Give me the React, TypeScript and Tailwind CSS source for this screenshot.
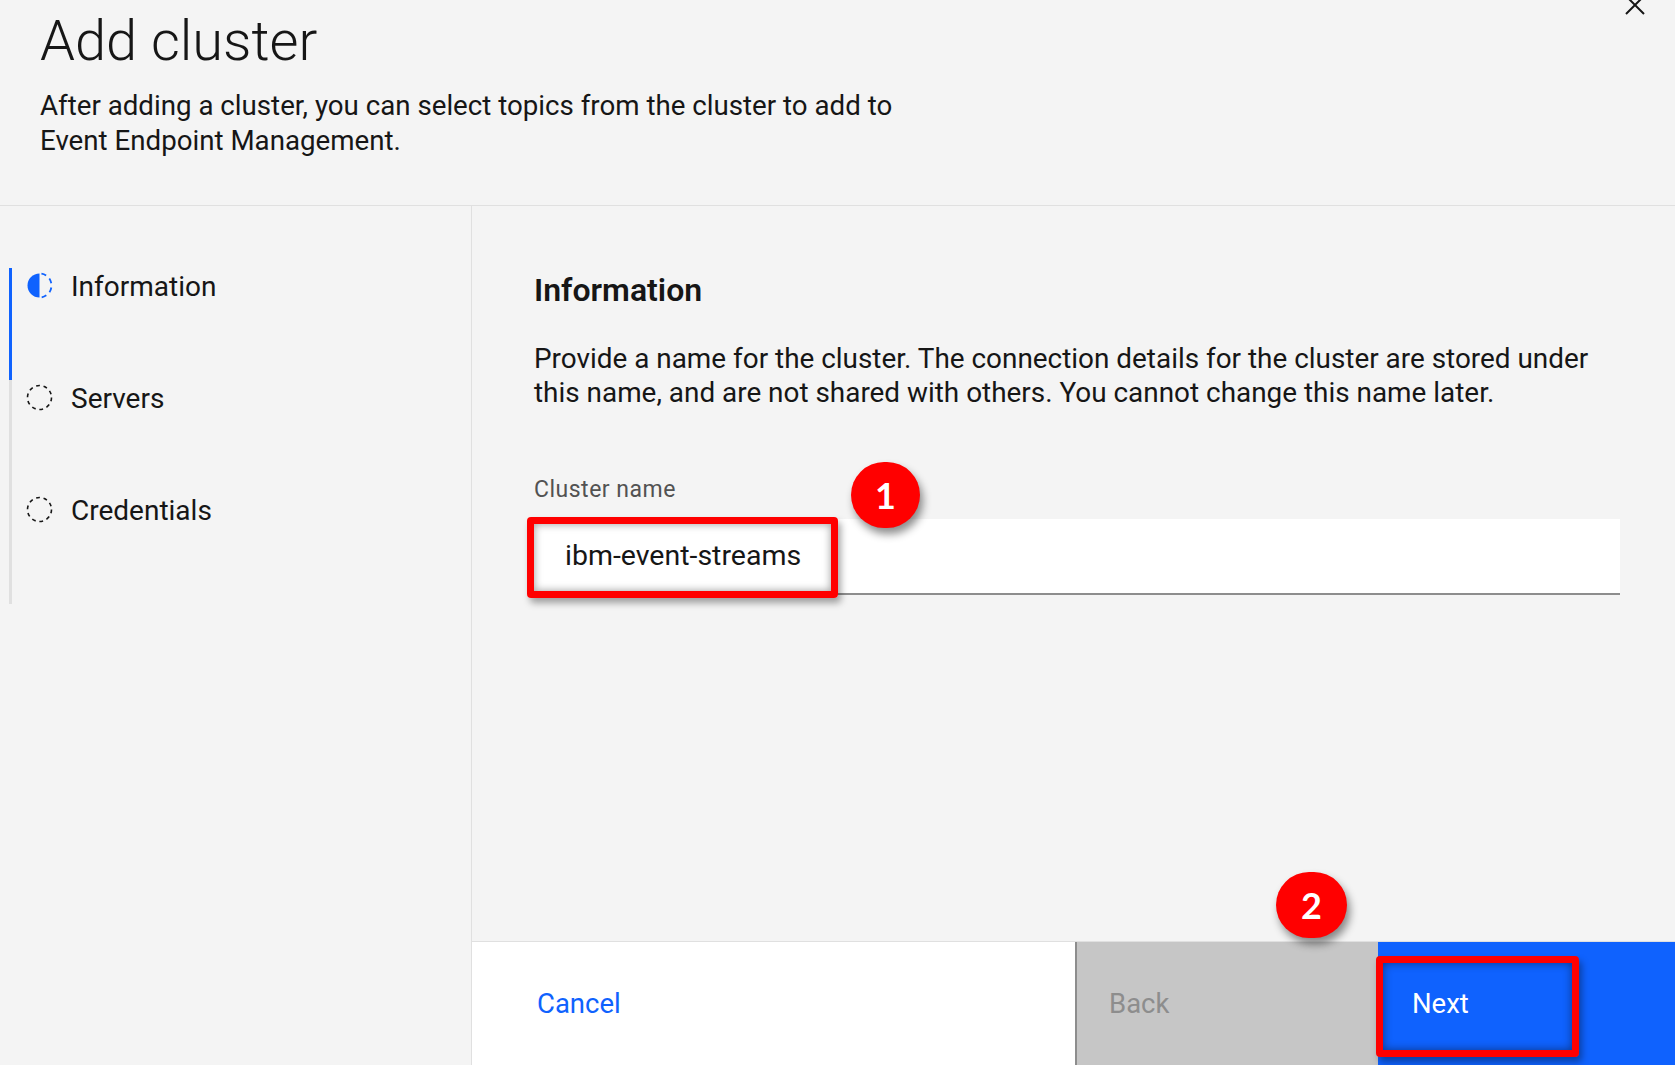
import React from "react";

type StepState = "current" | "todo";

const IncompleteIcon = () => (
  <svg width="27" height="27" viewBox="0 0 27 27" className="shrink-0">
    <path d="M13.5 1.5 A12 12 0 0 0 13.5 25.5 Z" fill="#0f62fe" />
    <path
      d="M13.5 1.5 A12 12 0 0 1 13.5 25.5"
      fill="none"
      stroke="#0f62fe"
      strokeWidth="1.8"
      strokeDasharray="5 4.4"
      strokeDashoffset="-2"
    />
  </svg>
);

const TodoIcon = () => (
  <svg width="27" height="27" viewBox="0 0 27 27" className="shrink-0">
    <circle
      cx="13.5"
      cy="13.5"
      r="12"
      fill="none"
      stroke="#161616"
      strokeWidth="1.6"
      strokeDasharray="3.8 3.74"
    />
  </svg>
);

const Step = ({ label, state }: { label: string; state: StepState }) => (
  <div
    className={
      state === "current"
        ? "flex h-[112px] items-start border-l-[3px] border-[#0f62fe] pt-[1px]"
        : "flex h-[112px] items-start border-l-[3px] border-[#e0e0e0] pt-[1px]"
    }
  >
    <div className="ml-[14px] mt-[3px]">
      {state === "current" ? <IncompleteIcon /> : <TodoIcon />}
    </div>
    <span className="ml-[18px] text-[28px] leading-[36px]">{label}</span>
  </div>
);

const App = () => {
  return (
    <div className="relative flex h-[1065px] w-[1675px] flex-col overflow-hidden bg-[#f4f4f4] font-['Roboto',sans-serif] text-[#161616]">
      <header className="relative h-[206px] shrink-0 border-b border-[#e0e0e0] px-[40px] pt-[9px]">
        <h1 className="text-[56px] font-light leading-[64px]">Add cluster</h1>
        <p className="mt-[15px] text-[27.7px] leading-[35px]">
          After adding a cluster, you can select topics from the cluster to add to
          <br />
          Event Endpoint Management.
        </p>
      </header>

      <div className="flex min-h-0 flex-1">
        <aside className="w-[472px] shrink-0 border-r border-[#e0e0e0] pl-[9px] pt-[62px]">
          <Step label="Information" state="current" />
          <Step label="Servers" state="todo" />
          <Step label="Credentials" state="todo" />
        </aside>

        <main className="flex min-w-0 flex-1 flex-col">
          <div className="flex-1 pl-[62px] pr-[55px] pt-[65px]">
            <h2 className="text-[32px] font-semibold leading-[38px]">Information</h2>
            <p className="mt-[33px] text-[27.9px] leading-[34px]">
              Provide a name for the cluster. The connection details for the cluster are stored under
              <br />
              this name, and are not shared with others. You cannot change this name later.
            </p>
            <label className="mt-[66px] block text-[23px] leading-[28px] tracking-[0.5px] text-[#525252]">
              Cluster name
            </label>
            <div className="mt-[15px] flex h-[76px] items-center border-b-2 border-[#8d8d8d] bg-white pl-[31px] text-[28.5px] leading-[36px]">
              ibm-event-streams
            </div>
          </div>

          <footer className="flex h-[124px] shrink-0 border-t border-[#e0e0e0] text-[27.5px] leading-[36px]">
            <button className="flex w-[603px] items-center bg-white pl-[65px] text-[#0f62fe]">
              Cancel
            </button>
            <button className="flex w-[303px] items-center border-l-2 border-[#8d8d8d] bg-[#c6c6c6] pl-[32px] text-[#8d8d8d]">
              Back
            </button>
            <button className="flex flex-1 items-center bg-[#0f62fe] pl-[34px] text-white">
              Next
            </button>
          </footer>
        </main>
      </div>

      {/* close icon, partly cut off at the top */}
      <svg
        width="26"
        height="26"
        viewBox="0 0 26 26"
        className="absolute left-[1622px] top-[-8px]"
      >
        <path d="M4 4 L22 22 M22 4 L4 22" stroke="#161616" strokeWidth="2" />
      </svg>

      {/* annotations */}
      <div className="absolute left-[527px] top-[517px] h-[81px] w-[311px] rounded-[4px] border-[7px] border-[#ff0000] shadow-[inset_0_0_8px_rgba(0,0,0,0.4),3px_5px_7px_rgba(0,0,0,0.35)]" />
      <div className="absolute left-[1376px] top-[956px] h-[101px] w-[203px] rounded-[4px] border-[7px] border-[#ff0000] shadow-[inset_0_0_10px_rgba(0,0,0,0.45),3px_5px_7px_rgba(0,0,0,0.35)]" />

      <div className="absolute left-[851px] top-[462px] flex h-[66px] w-[69px] items-center justify-center rounded-full bg-[#ff0000] font-['Lato',sans-serif] text-[36px] font-bold text-white shadow-[3px_6px_8px_rgba(0,0,0,0.45)]">
        1
      </div>
      <div className="absolute left-[1276px] top-[872px] flex h-[66px] w-[71px] items-center justify-center rounded-full bg-[#ff0000] font-['Lato',sans-serif] text-[36px] font-bold text-white shadow-[3px_6px_8px_rgba(0,0,0,0.45)]">
        2
      </div>
    </div>
  );
};

export default App;
